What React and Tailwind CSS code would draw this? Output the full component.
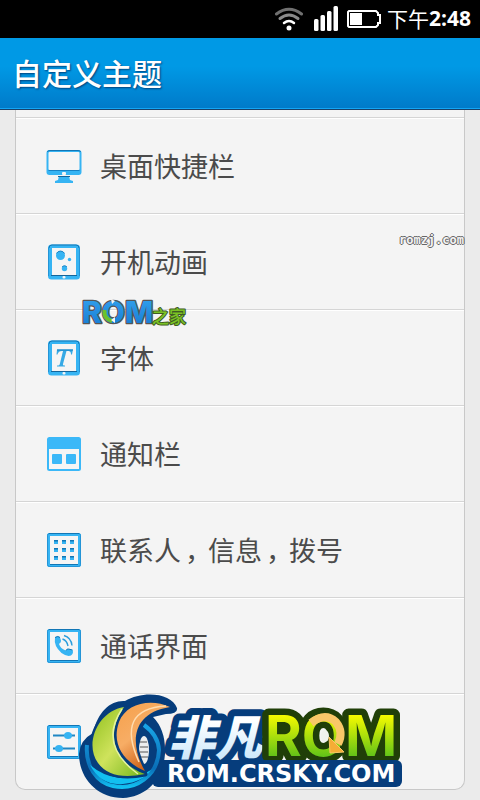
import { Fragment, useId } from 'react';

function DesktopIcon() {
  return (
    <svg width="36" height="36" viewBox="0 0 36 36" aria-hidden="true">
      <path d="M13 28h10l1 4 3 1v2H9v-2l3-1z" fill="#36b4f3" />
      <path d="M12 28.500h12" stroke="#14659b" />
      <rect x="0.5" y="2" width="35" height="25" rx="3" fill="#36b4f3" />
      <path d="M1.500 4q0-1.500 2.500-1.500h28q2.500 0 2.500 1.500" fill="none" stroke="#1276b5" />
      <rect x="2.5" y="4" width="31" height="18" rx="1" fill="#f5f5f5" />
      <path d="M2.5 22.500h31" stroke="#1782c4" />
      <rect x="16" y="24" width="4" height="3" rx="1" fill="#f5f5f5" />
    </svg>
  );
}

function Tablet({ children }) {
  return (
    <svg width="36" height="36" viewBox="0 0 36 36" aria-hidden="true">
      <rect x="2" y="0.5" width="32" height="35" rx="3.5" fill="#36b4f3" />
      <path d="M3 4q0-3 3-3h24q3 0 3 3" fill="none" stroke="#1276b5" />
      <path d="M2.500 4v28M33.500 4v28" stroke="#2494d6" />
      <rect x="6" y="4" width="24" height="27" fill="#f5f5f5" />
      <path d="M5 31.5h26" stroke="#14659b" />
      <rect x="16.5" y="32" width="3" height="2.5" rx="1" fill="#f5f5f5" />
      {children}
    </svg>
  );
}

function Square({ children }) {
  return (
    <svg width="36" height="36" viewBox="0 0 36 36" aria-hidden="true">
      <rect x="1" y="1" width="34" height="34" rx="2.5" fill="#36b4f3" />
      <rect x="1.500" y="1.500" width="33" height="33" rx="2" fill="none" stroke="#2494d6" />
      <path d="M3 1.5h30M4 32.5h28" stroke="#1276b5" />
      <rect x="4" y="4" width="28" height="28" fill="#f5f5f5" />
      {children}
    </svg>
  );
}

function AnimationIcon() {
  return (
    <Tablet>
      <g fill="#36b4f3">
        <circle cx="14.5" cy="11.5" r="4.5" />
        <circle cx="23.5" cy="15.5" r="1.7" />
        <circle cx="18.5" cy="24.5" r="2.7" />
      </g>
      <path d="M10.5 9.5a4.5 4.5 0 0 1 8 0M16.2 23a2.7 2.7 0 0 1 4.6 0" fill="none" stroke="#1782c4" />
    </Tablet>
  );
}

function FontIcon() {
  return (
    <Tablet>
      <path d="M11 9.5h16l-1 5h-1c0-3-1-3.500-4.500-3.500l-3.500 13c-.3 1.200.3 1.500 2 1.500v1h-8v-1c2 0 2.500-.3 2.800-1.500l3.200-13c-3.500 0-4.500.7-5.500 3.500h-1z" fill="#36a9e5" />
      <path d="M11 10h16" stroke="#1782c4" />
    </Tablet>
  );
}

function NotificationIcon() {
  return (
    <svg width="36" height="36" viewBox="0 0 36 36" aria-hidden="true">
      <rect x="1" y="1" width="34" height="34" rx="2.5" fill="#3bb8f8" />
      <rect x="3" y="13" width="30" height="20" fill="#f5f5f5" />
      <rect x="6" y="18" width="10" height="10" rx="1" fill="#3bb8f8" />
      <rect x="20" y="18" width="10" height="10" rx="1" fill="#3bb8f8" />
    </svg>
  );
}

function DialpadIcon() {
  return (
    <Square>
      {[8, 16, 24].map((y) =>
        [8, 16, 24].map((x) => (
          <g key={`${x}-${y}`}>
            <rect x={x} y={y} width="4" height="4" fill="#36b4f3" />
            <rect x={x} y={y} width="4" height="1.5" fill="#1276b5" />
          </g>
        ))
      )}
    </Square>
  );
}

function CallIcon() {
  return (
    <Square>
      <path d="M9 9.500q3-2.500 5 0l1 3q.5 1.500-2 3.500 1.500 4.500 6.500 6.500 1.500-2 3-1.500l4 1q1.500 3-1.500 5.500-4 1.500-9.500-2.500Q7.500 18 9 9.500z" fill="#36b4f3" />
      <path d="M9 9.500q3-2 5 0M20 22.500q1-2 2.500-1.500l4 1" fill="none" stroke="#1276b5" />
      <path d="M16.500 11q4.500 1.500 5.500 7M18 7.500q7 2 8 10" fill="none" stroke="#2a9ddc" strokeWidth="1.400" />
    </Square>
  );
}

function SettingsIcon() {
  return (
    <Square>
      <path d="M7 11.500h22M7 24.500h22" stroke="#2087c4" strokeWidth="2" />
      <ellipse cx="22" cy="11.500" rx="4" ry="3.500" fill="#36b4f3" />
      <ellipse cx="13" cy="24.500" rx="4" ry="3.500" fill="#36b4f3" />
    </Square>
  );
}

function StatusBar() {
  return (
    <div className="flex h-[38px] items-center justify-end bg-black pr-[9px] text-white">
      <svg className="mr-[10px]" width="30" height="26" viewBox="0 0 30 26" fill="none" strokeLinecap="round" aria-hidden="true">
        <circle cx="15" cy="22" r="2.5" fill="#fff" />
        <path d="M10 17q5-4 10 0" stroke="#fff" strokeWidth="2.500" />
        <path d="M6 12.500q9-7 18 0" stroke="#8a8a8a" strokeWidth="3" />
        <path d="M2.500 8q12.500-9.500 25 0" stroke="#707070" strokeWidth="3" />
      </svg>
      <svg className="mr-[9px]" width="24" height="26" viewBox="0 0 24 26" fill="#fff" aria-hidden="true">
        <rect x="0" y="13" width="4.500" height="12" rx="1.5" />
        <rect x="6.500" y="9" width="4.500" height="16" rx="1.5" />
        <rect x="13" y="5" width="4.500" height="20" rx="1.5" />
        <rect x="19.500" y="0" width="4.500" height="25" rx="1.5" />
      </svg>
      <svg className="mr-[6px]" width="34" height="18" viewBox="0 0 34 18" aria-hidden="true">
        <path d="M2 1h27l2 2v2h2v8h-2v2l-2 2H2l-1-1V2z" fill="none" stroke="#fff" strokeWidth="2" />
        <rect x="3" y="3" width="12" height="12" fill="#fff" />
      </svg>
      <span className="flex items-center text-[21px] font-['Noto_Sans_CJK_SC',sans-serif]">
        下午<span className="font-bold font-['Open_Sans',sans-serif]">2:48</span>
      </span>
    </div>
  );
}

function RomHomeMark() {
  const id = useId();
  return (
    <svg className="absolute left-16 top-[81px] z-10" width="110" height="34" viewBox="0 0 110 34" role="img" aria-label="ROM之家">
      <defs>
        <linearGradient id={id} x1="0" y1="0" x2="0" y2="1">
          <stop offset="0" stopColor="#35a5f0" />
          <stop offset="1" stopColor="#1478d0" />
        </linearGradient>
      </defs>
      <g strokeLinejoin="round" style={{ paintOrder: 'stroke' }}>
        <text x="2" y="28" stroke="#555" strokeWidth="2.500" fontFamily="Inter, sans-serif" fontSize="30" fontWeight="800" fill={`url(#${id})`}>ROM</text>
        <text x="72" y="28" stroke="#3f5a24" strokeWidth="2" fontFamily="'Noto Sans CJK SC', sans-serif" fontSize="17" fontWeight="500" fill="#7bc225">之家</text>
      </g>
      <path d="M24.500 15q-1 9 7.500 11" fill="none" stroke="#6cc22b" strokeWidth="4" />
      <path d="M31 4l4 2-3 3zM35 22l-4 3 4 3z" fill="#f4f4f4" />
    </svg>
  );
}

function CrskyLogo() {
  const id = useId();
  return (
    <svg className="absolute left-[60px] top-0 z-10" width="330" height="106" viewBox="76 694 330 106" role="img" aria-label="非凡ROM ROM.CRSKY.COM">
      <defs>
        <linearGradient id={`${id}g`} x1="0" y1="0" x2="1" y2="1">
          <stop offset="0" stopColor="#8fbf1c" />
          <stop offset="0.5" stopColor="#cfe35c" />
          <stop offset="1" stopColor="#74b51c" />
        </linearGradient>
        <linearGradient id={`${id}o`} x1="0" y1="0" x2="0.6" y2="1">
          <stop offset="0" stopColor="#f6a04a" />
          <stop offset="0.5" stopColor="#f7ad65" />
          <stop offset="1" stopColor="#c9560c" />
        </linearGradient>
        <linearGradient id={`${id}b`} x1="0" y1="0" x2="0" y2="1">
          <stop offset="0" stopColor="#18a5e6" />
          <stop offset="0.7" stopColor="#0a6fb8" />
          <stop offset="1" stopColor="#12bff0" />
        </linearGradient>
        <linearGradient id={`${id}w`} x1="0" y1="0" x2="0" y2="1">
          <stop offset="0.3" stopColor="#fff" />
          <stop offset="1" stopColor="#bfe2fa" />
        </linearGradient>
        <linearGradient id={`${id}r`} x1="0" y1="0" x2="0" y2="1">
          <stop offset="0.2" stopColor="#f4fa00" />
          <stop offset="0.8" stopColor="#62c318" />
        </linearGradient>
      </defs>

      <g strokeLinejoin="round" style={{ paintOrder: 'stroke' }}>
        <text x="168" y="755" stroke="#063d7c" strokeWidth="14" fontFamily="'Noto Sans CJK SC', sans-serif" fontSize="47" fontWeight="900" fontStyle="italic" fill={`url(#${id}w)`}>非凡</text>
        <text x="265" y="756" stroke="#203f08" strokeWidth="13" fontFamily="Inter, sans-serif" fontSize="56" fontWeight="700" fill={`url(#${id}r)`}>ROM</text>
      </g>
      <ellipse cx="325" cy="736" rx="4" ry="6" fill="#f0f2ee" />
      <path d="M311 723Q325 712 336 722Q344 732 338 744" fill="none" stroke="#f9c768" strokeWidth="8" />
      <path d="M329 737L344 752L330 753z" fill="#f5ad35" stroke="#f9c768" />

      <rect x="152" y="760" width="250" height="27" rx="6" fill="#063d7c" />
      <text x="167" y="782" fontFamily="'DejaVu Sans', sans-serif" fontSize="24" fontWeight="700" fill="#fff">ROM.CRSKY.COM</text>

      <path d="M93 733C98 711 111 700 125 701C143 690 172 693 177 708Q178 714 166 714L153 717Q166 730 165 754C163 780 146 797 123 798C97 798 79 778 79 754Q80 740 93 733z" fill="#063d7c" />
      <ellipse cx="144" cy="750" rx="5" ry="14" fill="#eceeef" />
      <path d="M140 742h7M140 747h8M140 752h8M141 757h7" stroke="#555" />
      <path d="M87 745C85 766 97 783 113 786C135 791 158 776 159 750Q158 735 144 725" fill="none" stroke={`url(#${id}b)`} strokeWidth="4" />
      <path d="M90 765Q101 786 123 784Q143 782 151 770Q136 779 119 778Q103 776 90 765z" fill="#12bff0" />
      <g strokeWidth="5" stroke="#063d7c" strokeLinejoin="round" style={{ paintOrder: 'stroke' }}>
        <path d="M124 707C98 711 84 744 98 763Q111 781 145 774C116 764 104 738 124 707z" fill={`url(#${id}g)`} />
        <path d="M170 707C151 698 126 703 119 722C110 747 128 764 145 771C132 749 127 714 170 707z" fill={`url(#${id}o)`} />
      </g>
      <path d="M122 709Q98 745 138 774" fill="none" stroke="#e5f3a0" strokeWidth="1.500" />
      <path d="M166 706Q115 709 139 762" fill="none" stroke="#ffdcae" strokeWidth="1.500" />
    </svg>
  );
}

function Label({ text }) {
  return (
    <span>
      {text.split('，').map((part, i) => (
        <Fragment key={part}>
          {i > 0 && <span className="inline-block w-[27px] indent-1 whitespace-nowrap">，</span>}
          {part}
        </Fragment>
      ))}
    </span>
  );
}

const items = [
  { id: 'dock', label: '桌面快捷栏', Icon: DesktopIcon },
  { id: 'boot', label: '开机动画', Icon: AnimationIcon, mark: <RomHomeMark />, note: 'romzj.com' },
  { id: 'font', label: '字体', Icon: FontIcon },
  { id: 'notification', label: '通知栏', Icon: NotificationIcon },
  { id: 'contacts', label: '联系人，信息，拨号', Icon: DialpadIcon },
  { id: 'call', label: '通话界面', Icon: CallIcon },
  { id: 'settings', label: '', Icon: SettingsIcon, mark: <CrskyLogo /> },
];

export default function App() {
  return (
    <div className="min-h-screen bg-[#ebebeb]">
      <StatusBar />
      <header className="flex h-[72px] items-center border-b border-[#17426b] bg-linear-to-b from-[#0099e5] from-40% to-[#007ac9] px-3 pb-1 shadow-[inset_0_-1px_0_#12a5f5]">
        <h1 className="text-[30px] leading-10 font-medium text-white font-['Noto_Sans_CJK_SC',sans-serif] [text-shadow:1px_1px_2px_#00407a]">自定义主题</h1>
      </header>
      <main className="px-[15px] pb-[11px]">
        <ul className="rounded-b-[10px] border border-t-0 border-[#c8c8c8] bg-[#f4f4f4] pt-[7px]">
          {items.map(({ id, label, Icon, mark, note }) => (
            <li key={id} className="relative border-t border-[#d5d5d5]">
              <button type="button" aria-label={label || '设置'} className="flex h-[95px] w-full items-center gap-[18px] border-t border-white pl-[30px] text-left text-[27px] text-[#4b4b4b] font-['Noto_Sans_CJK_SC',sans-serif]">
                <Icon />
                <Label text={label} />
              </button>
              {mark}
              {note && (
                <span className="absolute top-[18px] right-0 text-xs leading-4 font-bold text-[#f4f4f4] font-['DejaVu_Sans_Mono',monospace] [text-shadow:1px_0_#666,-1px_0_#666,0_1px_#666,0_-1px_#666]">{note}</span>
              )}
            </li>
          ))}
        </ul>
      </main>
    </div>
  );
}
